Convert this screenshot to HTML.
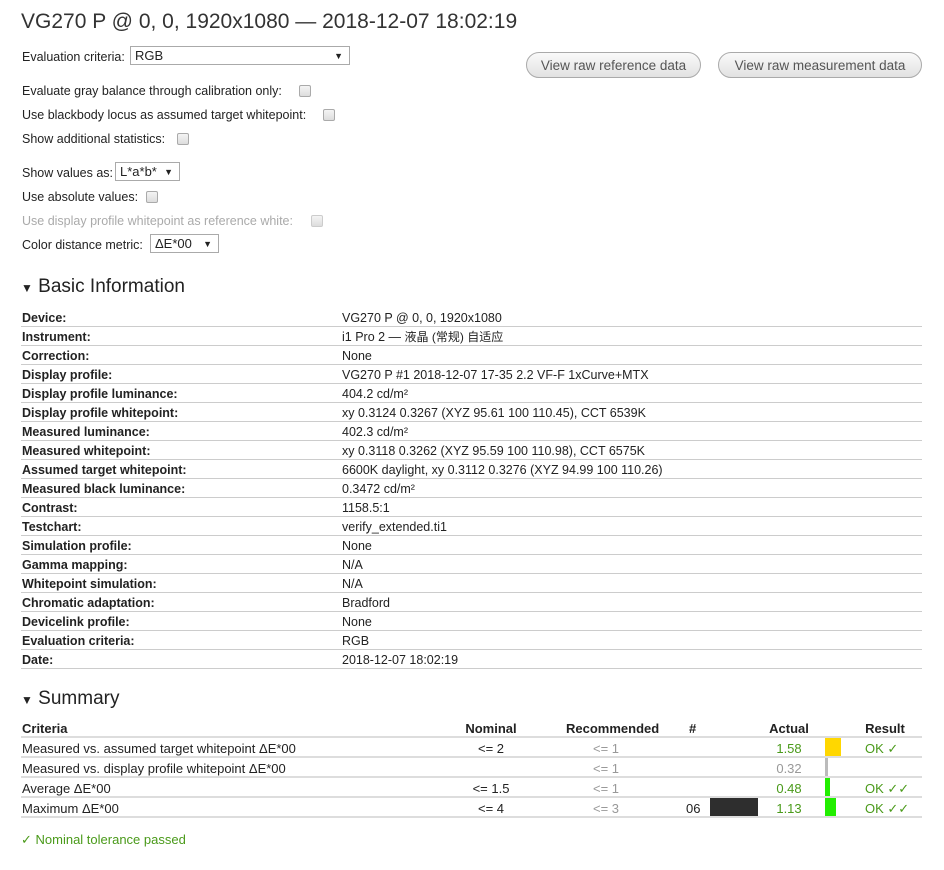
<!DOCTYPE html>
<html><head><meta charset="utf-8"><style>
body{margin:0;background:#fff;font-family:"Liberation Sans","Noto Sans CJK SC",sans-serif;font-size:12.5px;color:#222;line-height:16px;}
.a{position:absolute;white-space:nowrap;}
.cb{position:absolute;width:10px;height:10px;border:1px solid #aaa;border-radius:2px;background:linear-gradient(#f4f4f4,#ddd);}
.sel{position:absolute;border:1px solid #aaa;height:19px;box-sizing:border-box;padding:1px 4px;font-size:13px;background:#fff;}
.sel b{position:absolute;right:6px;top:1px;font-size:9px;}
.btn{position:absolute;height:26px;border:1px solid #aaa;border-radius:13px;background:linear-gradient(#fafafa,#e2e2e2);color:#555;font-size:13.5px;text-align:center;line-height:25px;box-sizing:border-box;}
.row{position:absolute;left:21px;width:901px;height:19px;border-bottom:1px solid #ccc;box-sizing:border-box;}
.row span{position:absolute;top:2px;height:16px;line-height:16px;overflow:visible;}
.row .k{left:1px;font-weight:bold;}
.row .v{left:321px;}
.cjk{font-size:12px;}
.s{position:absolute;left:21px;width:901px;height:20px;border-bottom:2px solid #ddd;box-sizing:border-box;font-family:"Liberation Sans Narrow","Liberation Sans",sans-serif;font-size:13px;}
.s span{position:absolute;top:3px;}
.c{text-align:center;width:80px;}
.g{color:#4a9a1a}.gr{color:#999}
</style></head><body>
<div class="a" style="left:21px;top:10px;font-size:21px;line-height:24px;color:#333">VG270 P @ 0, 0, 1920x1080 — 2018-12-07 18:02:19</div>
<div class="a" style="left:22px;top:49px">Evaluation criteria:</div>
<div class="sel" style="left:130px;top:46px;width:220px">RGB<b>▼</b></div>
<div class="btn" style="left:526px;top:52px;width:175px">View raw reference data</div>
<div class="btn" style="left:718px;top:52px;width:204px">View raw measurement data</div>
<div class="a" style="left:22px;top:83px">Evaluate gray balance through calibration only:</div><div class="cb" style="left:299px;top:85px"></div>
<div class="a" style="left:22px;top:107px">Use blackbody locus as assumed target whitepoint:</div><div class="cb" style="left:323px;top:109px"></div>
<div class="a" style="left:22px;top:131px">Show additional statistics:</div><div class="cb" style="left:177px;top:133px"></div>
<div class="a" style="left:22px;top:165px">Show values as:</div>
<div class="sel" style="left:115px;top:162px;width:65px">L*a*b*<b>▼</b></div>
<div class="a" style="left:22px;top:189px">Use absolute values:</div><div class="cb" style="left:146px;top:191px"></div>
<div class="a" style="left:22px;top:213px;color:#aaa">Use display profile whitepoint as reference white:</div><div class="cb" style="left:311px;top:215px;border-color:#ccc"></div>
<div class="a" style="left:22px;top:237px">Color distance metric:</div>
<div class="sel" style="left:150px;top:234px;width:69px">ΔE*00<b>▼</b></div>
<div class="a" style="left:21px;top:276px;font-size:19px;line-height:22px;color:#222"><span style="font-size:12px">▼</span> Basic Information</div>
<div class="row" style="top:308px"><span class="k">Device:</span><span class="v">VG270 P @ 0, 0, 1920x1080</span></div>
<div class="row" style="top:327px"><span class="k">Instrument:</span><span class="v">i1 Pro 2 — <span class="cjk" style="position:static">液晶 (常规) 自适应</span></span></div>
<div class="row" style="top:346px"><span class="k">Correction:</span><span class="v">None</span></div>
<div class="row" style="top:365px"><span class="k">Display profile:</span><span class="v">VG270 P #1 2018-12-07 17-35 2.2 VF-F 1xCurve+MTX</span></div>
<div class="row" style="top:384px"><span class="k">Display profile luminance:</span><span class="v">404.2 cd/m²</span></div>
<div class="row" style="top:403px"><span class="k">Display profile whitepoint:</span><span class="v">xy 0.3124 0.3267 (XYZ 95.61 100 110.45), CCT 6539K</span></div>
<div class="row" style="top:422px"><span class="k">Measured luminance:</span><span class="v">402.3 cd/m²</span></div>
<div class="row" style="top:441px"><span class="k">Measured whitepoint:</span><span class="v">xy 0.3118 0.3262 (XYZ 95.59 100 110.98), CCT 6575K</span></div>
<div class="row" style="top:460px"><span class="k">Assumed target whitepoint:</span><span class="v">6600K daylight, xy 0.3112 0.3276 (XYZ 94.99 100 110.26)</span></div>
<div class="row" style="top:479px"><span class="k">Measured black luminance:</span><span class="v">0.3472 cd/m²</span></div>
<div class="row" style="top:498px"><span class="k">Contrast:</span><span class="v">1158.5:1</span></div>
<div class="row" style="top:517px"><span class="k">Testchart:</span><span class="v">verify_extended.ti1</span></div>
<div class="row" style="top:536px"><span class="k">Simulation profile:</span><span class="v">None</span></div>
<div class="row" style="top:555px"><span class="k">Gamma mapping:</span><span class="v">N/A</span></div>
<div class="row" style="top:574px"><span class="k">Whitepoint simulation:</span><span class="v">N/A</span></div>
<div class="row" style="top:593px"><span class="k">Chromatic adaptation:</span><span class="v">Bradford</span></div>
<div class="row" style="top:612px"><span class="k">Devicelink profile:</span><span class="v">None</span></div>
<div class="row" style="top:631px"><span class="k">Evaluation criteria:</span><span class="v">RGB</span></div>
<div class="row" style="top:650px"><span class="k">Date:</span><span class="v">2018-12-07 18:02:19</span></div>
<div class="a" style="left:21px;top:688px;font-size:19px;line-height:22px;color:#222"><span style="font-size:12px">▼</span> Summary</div>
<div class="s" style="top:718px;font-weight:bold"><span style="left:1px">Criteria</span><span class="c" style="left:430px">Nominal</span><span class="c" style="left:545px;width:80px">Recommended</span><span style="left:668px">#</span><span class="c" style="left:728px">Actual</span><span class="c" style="left:824px">Result</span></div>
<div class="s" style="top:738px"><span style="left:1px">Measured vs. assumed target whitepoint ΔE*00</span><span class="c" style="left:430px">&lt;= 2</span><span class="c gr" style="left:545px">&lt;= 1</span><span class="c g" style="left:728px">1.58</span><div style="position:absolute;left:804px;top:0;width:16px;height:18px;background:#ffd700"></div><span class="g" style="left:844px">OK ✓</span></div>
<div class="s" style="top:758px"><span style="left:1px">Measured vs. display profile whitepoint ΔE*00</span><span class="c gr" style="left:545px">&lt;= 1</span><span class="c gr" style="left:728px">0.32</span><div style="position:absolute;left:804px;top:0;width:3px;height:18px;background:#bbb"></div></div>
<div class="s" style="top:778px"><span style="left:1px">Average ΔE*00</span><span class="c" style="left:430px">&lt;= 1.5</span><span class="c gr" style="left:545px">&lt;= 1</span><span class="c g" style="left:728px">0.48</span><div style="position:absolute;left:804px;top:0;width:5px;height:18px;background:#22ee00"></div><span class="g" style="left:844px">OK ✓✓</span></div>
<div class="s" style="top:798px"><span style="left:1px">Maximum ΔE*00</span><span class="c" style="left:430px">&lt;= 4</span><span class="c gr" style="left:545px">&lt;= 3</span><span style="left:665px">06</span><div style="position:absolute;left:689px;top:0;width:48px;height:18px;background:#2e2e2e"></div><span class="c g" style="left:728px">1.13</span><div style="position:absolute;left:804px;top:0;width:11px;height:18px;background:#22ee00"></div><span class="g" style="left:844px">OK ✓✓</span></div>
<div class="a g" style="left:21px;top:832px;font-family:'Liberation Sans Narrow','Liberation Sans',sans-serif;font-size:13px">✓ Nominal tolerance passed</div>
</body></html>
